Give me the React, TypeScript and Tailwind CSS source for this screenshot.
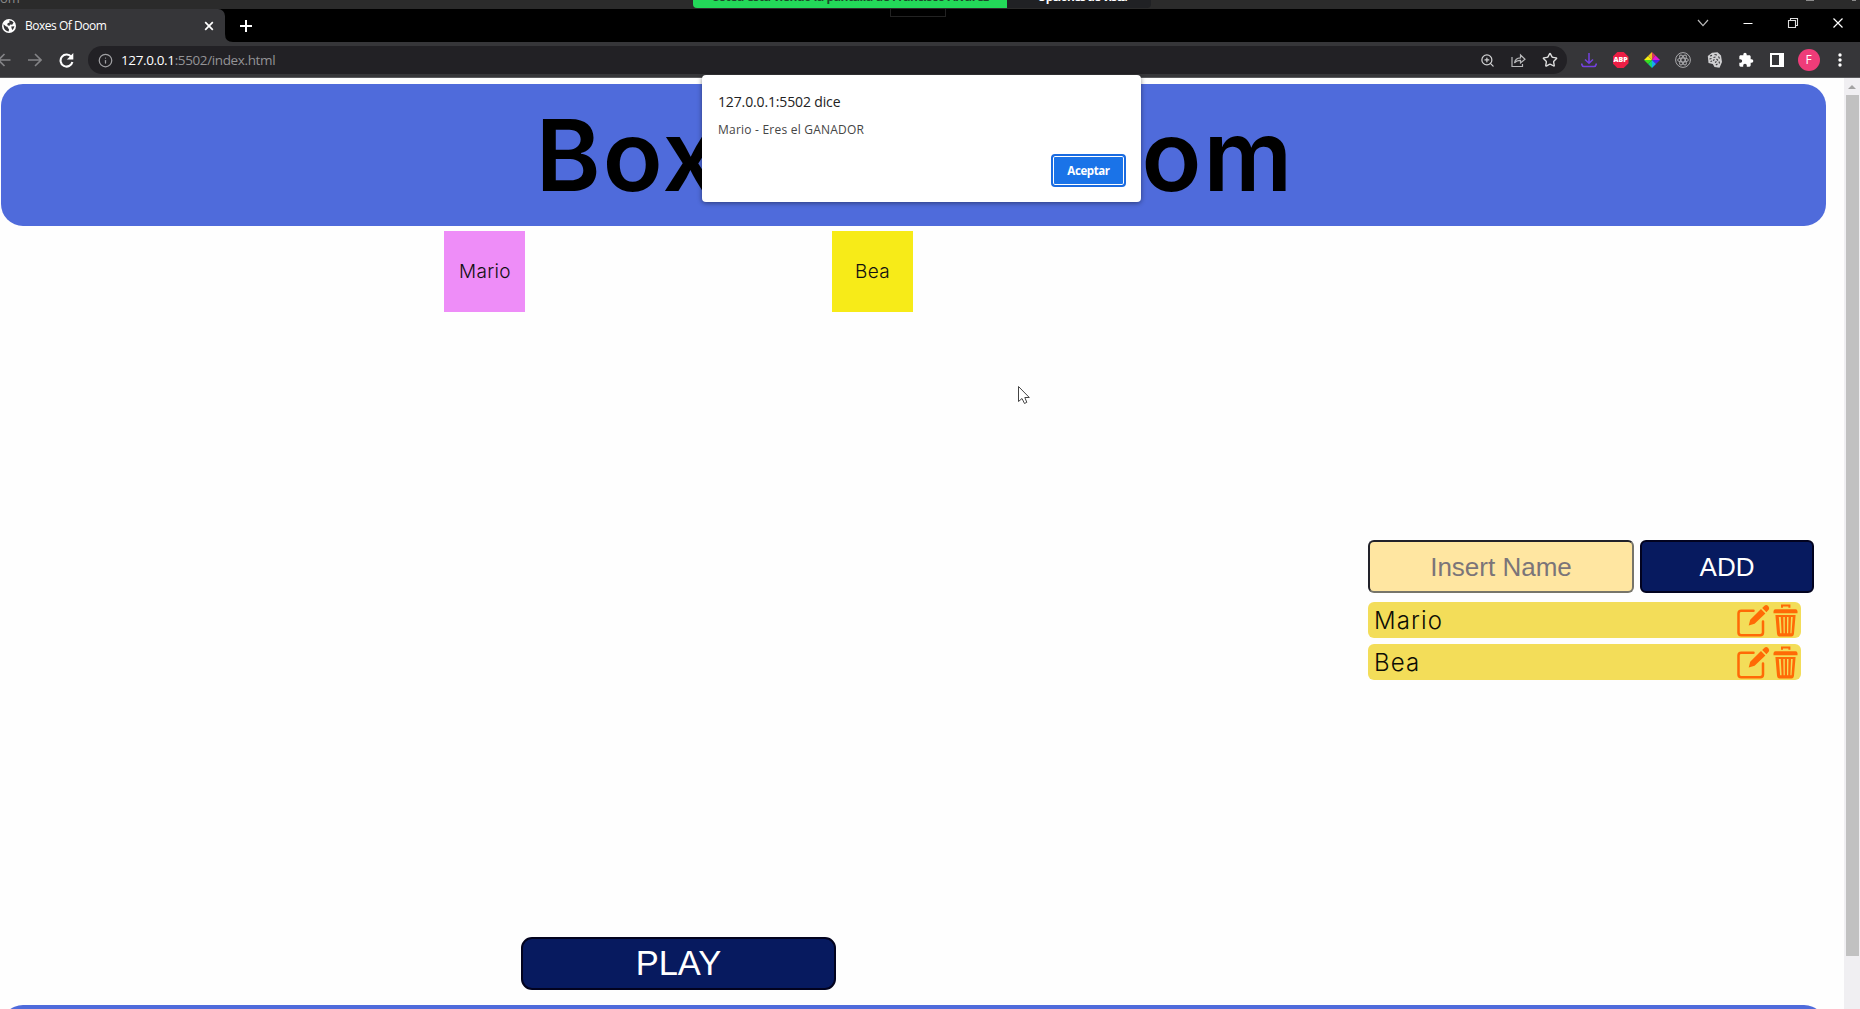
import React from "react";
import { Info, ZoomIn, Star } from "lucide-react";
import { MdExtension } from "react-icons/md";

const players = ["Mario", "Bea"];

function ScreenShareStrip() {
  return (
    <div className="relative flex h-[9px] shrink-0 overflow-hidden bg-[#2b2b2b] font-['Open_Sans',sans-serif] whitespace-nowrap">
      <div className="h-[9px] w-[693px] overflow-hidden text-[13px] leading-[18px] text-[#8b8b8b]">
        <span className="-mt-[11px] block">om</span>
      </div>
      <div className="h-[8px] w-[314px] overflow-hidden rounded-bl-[4px] bg-[#23d959] text-center text-[12px] leading-[18px] font-bold tracking-[-0.43px] text-[#1c4a2a]">
        <span className="-mt-[12px] block">Usted está viendo la pantalla de Francisco Alvarez</span>
      </div>
      <div className="h-[8px] w-[144px] overflow-hidden rounded-br-[4px] bg-[#202124] pl-[30px] text-[12px] leading-[18px] font-bold tracking-[-0.9px] text-white">
        <span className="-mt-[12px] block">Opciones de vista</span>
      </div>
      <div className="ml-[655px] h-px w-2 bg-[#8b8b8b]" />
      <div className="ml-[38px] h-px w-1 bg-[#8b8b8b]" />
    </div>
  );
}

function Globe() {
  return (
    <svg width="14" height="14" viewBox="0 0 14 14" className="shrink-0">
      <circle cx="7" cy="7" r="7" fill="#fff" />
      <path d="M1.5 5.2 4.2 7.5 5.6 7.8 6 9.3 7 10 6.7 12.4C3.7 12.2 1.4 9.6 1.5 5.2ZM7.2 1.4C9 1.3 10.6 2.2 11.6 3.6L10.2 5.8 8 5.6 7.4 7 5.3 6 5.6 4.2 7.6 3.4ZM9.2 7.5 12.4 7.2C12.2 8.7 11.4 10 10.3 10.9L9.6 9.2Z" fill="#353538" />
    </svg>
  );
}

function TabBar() {
  return (
    <div className="relative flex h-[33px] shrink-0 bg-black">
      <div className="flex h-[33px] w-[225px] items-center rounded-tr-[7px] bg-[#363639] pl-[2px] text-white">
        <Globe />
        <span className="ml-[9px] w-[178px] font-['Open_Sans',sans-serif] text-[12px] tracking-[-0.48px]">Boxes Of Doom</span>
        <svg width="10" height="10" viewBox="0 0 10 10" className="ml-px">
          <path d="M1.2 1.2 8.8 8.8M8.8 1.2 1.2 8.8" stroke="#fff" strokeWidth="1.7" />
        </svg>
      </div>
      <svg width="8" height="8" viewBox="0 0 8 8" className="self-end">
        <path d="M0 0Q0 8 8 8H0Z" fill="#363639" />
      </svg>
      <svg width="12" height="12" viewBox="0 0 12 12" className="mt-[11px] ml-[7px]">
        <path d="M6 0V12M0 6H12" stroke="#fff" strokeWidth="2" />
      </svg>
      <div className="mr-[16px] ml-auto flex h-[28px] items-center gap-[33px]">
        <svg width="12" height="12" viewBox="0 0 12 12"><path d="M1 3 6 8.6 11 3" stroke="#bbb" strokeWidth="1.2" fill="none" /></svg>
        <svg width="12" height="12" viewBox="0 0 12 12"><path d="M1.5 6.5H10.5" stroke="#fff" strokeWidth="1" /></svg>
        <svg width="12" height="12" viewBox="0 0 12 12"><path d="M1.5 3.5H8.5V10.5H1.5ZM3.5 3.5V1.5H10.5V8.5H8.5" stroke="#ddd" strokeWidth="1.1" fill="none" /></svg>
        <svg width="12" height="12" viewBox="0 0 12 12"><path d="M1.5 1.5 10.5 10.5M10.5 1.5 1.5 10.5" stroke="#fff" strokeWidth="1.2" /></svg>
      </div>
      <div className="absolute top-0 left-[890px] h-[8px] w-[56px] border border-t-0 border-[#222]" />
    </div>
  );
}

function Slot({ children }: { children: React.ReactNode }) {
  return <div className="flex w-[31.35px] shrink-0 items-center justify-center">{children}</div>;
}

function Toolbar() {
  return (
    <div className="flex h-[36px] shrink-0 items-center border-b border-[#5a5a5d] bg-[#363639] pt-px">
      <svg width="11" height="14" viewBox="0 0 11 14" className="shrink-0"><path d="M10.5 7H-2M4.5 1-1.5 7 4.5 13" stroke="#848487" strokeWidth="1.6" fill="none" /></svg>
      <svg width="14" height="14" viewBox="0 0 14 14" className="ml-[17px] shrink-0"><path d="M0 7H13M7 1 13 7 7 13" stroke="#848487" strokeWidth="1.6" fill="none" /></svg>
      <svg width="15" height="15" viewBox="0 0 15 15" className="ml-[17px] shrink-0">
        <path d="M12.4 4A6 6 0 1 0 13.4 9" stroke="#fff" strokeWidth="2.1" fill="none" />
        <path d="M14.3 0V6.6H7.8Z" fill="#fff" />
      </svg>
      <div className="ml-[14px] flex h-[28px] w-[1479px] shrink-0 items-center rounded-full bg-[#222125] pl-[10px]">
        <Info size={15} strokeWidth={2} color="#a0a0a3" />
        <span className="ml-[8px] font-['Open_Sans',sans-serif] text-[13.5px] tracking-[-0.37px] text-[#939396]">
          <span className="text-white">127.0.0.1</span>:5502/index.html
        </span>
        <div className="mr-px ml-auto flex">
          <Slot><ZoomIn size={15} color="#d0d0d2" strokeWidth={2} /></Slot>
          <Slot>
            <svg width="15" height="15" viewBox="0 0 15 15"><path d="M1 4V13.5H11.5V11M3.5 10C4 6.5 6 5 9.5 4.9V2L14 6.2 9.5 10V7.3C7 7.3 5 8 3.5 10Z" stroke="#b8b8ba" strokeWidth="1.2" fill="none" /></svg>
          </Slot>
          <Slot><Star size={16} color="#ddd" strokeWidth={2.1} /></Slot>
        </div>
      </div>
      <div className="ml-[6.5px] flex">
        <Slot>
          <svg width="16" height="15" viewBox="0 0 16 15"><path d="M8 0V10M4 6.5 8 10.3 12 6.5" stroke="#7440e0" strokeWidth="1.5" fill="none" /><path d="M.7 10.5Q.9 13.5 3 13.5H13Q15 13.5 15.3 10.5" stroke="#7440e0" strokeWidth="1.7" fill="none" /></svg>
        </Slot>
        <Slot>
          <div className="flex size-[16px] items-center justify-center bg-[#ed1e45] font-['Open_Sans',sans-serif] text-[7px] font-extrabold text-white [clip-path:polygon(30%_0,70%_0,100%_30%,100%_70%,70%_100%,30%_100%,0_70%,0_30%)]">ABP</div>
        </Slot>
        <Slot>
          <svg width="16" height="16" viewBox="0 0 16 16">
            <path d="M8 8 8 0 11.5 3.5Z" fill="#d13a5c" />
            <path d="M8 8 11.5 3.5 16 8Z" fill="#e018d8" />
            <path d="M8 8H16L12 12Z" fill="#4a20e8" />
            <path d="M8 8 12 12 8 16Z" fill="#18a8f0" />
            <path d="M8 8V16L4 12Z" fill="#10d878" />
            <path d="M8 8 4 12 0 8Z" fill="#38e020" />
            <path d="M8 8H0L4 4Z" fill="#f4f010" />
            <path d="M8 8 4 4 8 0Z" fill="#f0c020" />
          </svg>
        </Slot>
        <Slot>
          <svg width="16" height="16" viewBox="0 0 16 16" stroke="#aaaaad" strokeWidth="1" fill="none">
            <circle cx="8" cy="8" r="7.4" />
            <ellipse cx="8" cy="8" rx="5.5" ry="2" /><ellipse cx="8" cy="8" rx="5.5" ry="2" transform="rotate(60 8 8)" /><ellipse cx="8" cy="8" rx="5.5" ry="2" transform="rotate(120 8 8)" />
          </svg>
        </Slot>
        <Slot>
          <svg width="16" height="16" viewBox="0 0 16 16">
            <path d="M5 .8 10.5.2 14 3.5 15 10 12.5 15.8 7.5 15 5.8 12 1.5 11 .8 4Z" fill="#cfcfd1" />
            <path d="M3 4 5 3.4M7.5 2.5 10 3M11.5 4.5 12.5 6.5M6.5 5.5 8.5 5M2.5 7 4.5 6.5M9.5 7 11 8.5M6 8.5 7.5 7.5M3.5 9.5 5 9M8 10.5 9.5 9.5M12 9.5 12.5 11.5M8.8 13 10.5 12" fill="none" stroke="#39393c" strokeWidth="1.1" />
          </svg>
        </Slot>
        <Slot><MdExtension size={16} color="#fff" /></Slot>
        <Slot>
          <svg width="14" height="14" viewBox="0 0 14 14"><path d="M0 0H14V14H0ZM2 2V12H9V2Z" fill="#fff" fillRule="evenodd" /></svg>
        </Slot>
        <Slot>
          <div className="flex size-[22px] shrink-0 items-center justify-center rounded-full bg-[#ef3c79] font-['Open_Sans',sans-serif] text-[12px] text-white">F</div>
        </Slot>
        <Slot>
          <svg width="4" height="14" viewBox="0 0 4 14" fill="#fff"><circle cx="2" cy="2" r="1.7" /><circle cx="2" cy="7" r="1.7" /><circle cx="2" cy="12" r="1.7" /></svg>
        </Slot>
      </div>
    </div>
  );
}

function EditIcon() {
  return (
    <svg width="33" height="33" viewBox="0 0 33 33" className="shrink-0">
      <path d="M16.5 6.8H4.2Q1.5 6.8 1.5 9.5V28.6Q1.5 31.3 4.2 31.3H23.2Q26 31.3 26 28.6V17.5" stroke="#ff6a06" strokeWidth="2.5" fill="none" strokeLinecap="round" />
      <path d="M11.7 21.5 13.2 15.8 24 5 28.4 9.4 17.6 19.8ZM25.2 4 27.5 1.7Q29.2.4 31.2 1.9 33 3.8 31.7 5.8L29.4 8.2Z" fill="#ff6a06" />
    </svg>
  );
}

function TrashIcon() {
  return (
    <svg width="25" height="33" viewBox="0 0 25 33" className="shrink-0">
      <path d="M9 3.7V1.5H16.4V3.7" stroke="#ff6a06" strokeWidth="2" fill="none" />
      <path d="M2.5 5.3H22.5Q24.5 5.4 24.5 7.5V9.3H.5V7.5Q.5 5.4 2.5 5.3Z" fill="#ff6a06" />
      <path d="M2.4 11H22.6L21 29.5Q20.7 32.5 18.5 32.5H6.5Q4.3 32.5 4 29.5ZM5.8 13 7.1 29.3H8.6L7.8 13ZM10.3 13 10.6 29.3H11.8V13ZM14 13V29.3H15.2L15.5 13ZM18 13 17.4 29.3H18.5L19.7 13Z" fill="#ff6a06" fillRule="evenodd" />
    </svg>
  );
}

function AlertDialog() {
  return (
    <div className="absolute top-[75px] left-[702px] flex h-[127px] w-[439px] flex-col rounded-[4px] bg-white pt-[16px] pr-[15px] pb-[15px] pl-[16px] font-['Open_Sans',sans-serif] shadow-[0_1px_5px_rgba(0,0,0,0.45)]">
      <div className="text-[14px] leading-[22px] tracking-[-0.14px] text-[#222]">127.0.0.1:5502 dice</div>
      <div className="mt-[8px] text-[12px] leading-[18px] tracking-[0.22px] text-[#454545]">Mario - Eres el GANADOR</div>
      <button className="mt-auto flex h-[33px] w-[75px] shrink-0 items-center justify-center self-end rounded-[4px] border-2 border-[#1a6be0] bg-[#1a73e8] text-[11.5px] font-bold tracking-[-0.4px] text-white shadow-[inset_0_0_0_1px_#fff]">Aceptar</button>
    </div>
  );
}

export default function App() {
  return (
    <div className="relative flex h-[1009px] w-[1860px] flex-col overflow-hidden bg-white">
      <ScreenShareStrip />
      <TabBar />
      <Toolbar />
      <div className="flex min-h-0 flex-1">
        <main className="flex w-[1844px] flex-col overflow-hidden bg-[#fefefe] pt-[6px] pl-px">
          <header className="flex h-[142px] w-[1825px] shrink-0 items-center justify-center rounded-[22px] bg-[#4f6bdb] pt-[2px] pl-[3px]">
            <h1 className="font-['Inter',sans-serif] text-[98.5px] leading-none font-[560] tracking-[2px] whitespace-nowrap text-black">Boxes Of Doom</h1>
          </header>
          <div className="flex h-[779px] shrink-0">
            <section className="flex w-[1367px] flex-col">
              <div className="mt-[5px] ml-[443px] flex gap-[306.5px] font-['Inter',sans-serif] text-[19px] font-[350] tracking-[0.3px] text-[#111]">
                <div className="flex size-[81px] items-center justify-center bg-[#ee8df8] pt-[2px] pl-px">Mario</div>
                <div className="flex size-[81px] items-center justify-center bg-[#f7eb18] pt-[2px] pl-px">Bea</div>
              </div>
              <button className="mt-auto mb-[15px] ml-[520px] h-[53px] w-[315px] rounded-[11px] border-2 border-[#02031f] bg-[#071a5f] font-['Liberation_Sans',sans-serif] text-[34.5px] leading-none text-white">PLAY</button>
            </section>
            <aside className="flex w-[446px] flex-col pt-[314px]">
              <div className="flex gap-[6px] font-['Liberation_Sans',sans-serif] text-[26px]">
                <input placeholder="Insert Name" className="h-[53px] w-[266px] rounded-[6px] border-2 border-t-[#22222a] border-r-[#77756a] border-b-[#77756a] border-l-[#22222a] bg-[#ffe6a1] pt-[2px] text-center placeholder:text-[#7b7579]" />
                <button className="h-[53px] w-[174px] rounded-[6px] border-2 border-[#02031f] bg-[#071a5f] pt-[2px] text-white">ADD</button>
              </div>
              <ul className="mt-[9px] flex w-[433px] flex-col gap-[6px] font-['Inter',sans-serif] text-[24px] font-[350] tracking-[1.1px] text-[#0d0d05]">
                {players.map((name) => (
                  <li key={name} className="flex h-[36px] items-center rounded-[6px] bg-[#f3dd59] pr-[3px] pl-[6px]">
                    <span className="mt-px mr-auto">{name}</span>
                    <EditIcon />
                    <span className="ml-[3px] flex"><TrashIcon /></span>
                  </li>
                ))}
              </ul>
            </aside>
          </div>
          <footer className="h-[142px] w-[1825px] shrink-0 rounded-[22px] bg-[#4f6bdb]" />
        </main>
        <div className="flex w-[16px] flex-col items-center bg-[#f0eff2]">
          <svg width="8" height="17" viewBox="0 0 8 17"><path d="M0 11 4 7 8 11Z" fill="#a3a3a3" /></svg>
          <div className="h-[861px] w-[13px] bg-[#c1c1c1]" />
        </div>
      </div>
      <AlertDialog />
      <svg width="14" height="21" viewBox="0 0 14 21" className="absolute top-[385px] left-[1017px]">
        <path d="M1.5 1.5V16.5L5 13.5 7.5 18.5 9.8 17.3 7.8 12.5H12.3Z" fill="#fff" stroke="#444" strokeWidth="1" />
      </svg>
    </div>
  );
}
